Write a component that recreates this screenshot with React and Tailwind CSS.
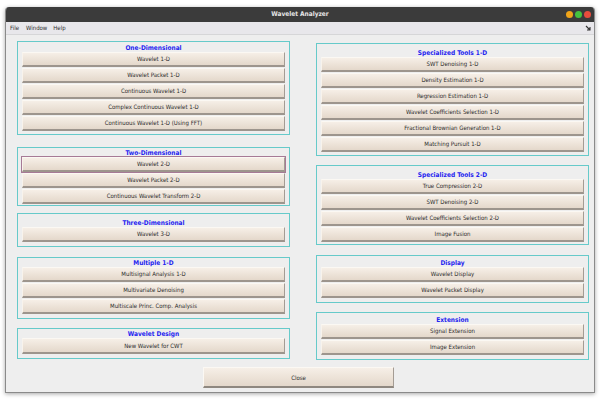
const left = [
  { title: "One-Dimensional", mt: "mt-[6px]", t: "h-[10px]", pb: "pb-[3px]", items: ["Wavelet 1-D", "Wavelet Packet 1-D", "Continuous Wavelet 1-D", "Complex Continuous Wavelet 1-D", "Continuous Wavelet 1-D (Using FFT)"] },
  { title: "Two-Dimensional", mt: "mt-[12px]", t: "h-[9px]", pb: "pb-[1px]", items: ["Wavelet 2-D", "Wavelet Packet 2-D", "Continuous Wavelet Transform 2-D"], focus: 0 },
  { title: "Three-Dimensional", mt: "mt-[7px]", t: "h-[13px]", pb: "pb-[4px]", items: ["Wavelet 3-D"] },
  { title: "Multiple 1-D", mt: "mt-[10px]", t: "h-[9px]", pb: "pb-[4px]", items: ["Multisignal Analysis 1-D", "Multivariate Denoising", "Multiscale Princ. Comp. Analysis"] },
  { title: "Wavelet Design", mt: "mt-[9px]", t: "h-[9px]", pb: "pb-[4px]", items: ["New Wavelet for CWT"], tall: true },
];

const right = [
  { title: "Specialized Tools 1-D", mt: "mt-[8px]", t: "h-[13px]", pb: "pb-[3px]", items: ["SWT Denoising 1-D", "Density Estimation 1-D", "Regression Estimation 1-D", "Wavelet Coefficients Selection 1-D", "Fractional Brownian Generation 1-D", "Matching Pursuit 1-D"] },
  { title: "Specialized Tools 2-D", mt: "mt-[9px]", t: "h-[13px]", pb: "pb-[2px]", items: ["True Compression 2-D", "SWT Denoising 2-D", "Wavelet Coefficients Selection 2-D", "Image Fusion"] },
  { title: "Display", mt: "mt-[10px]", t: "h-[11px]", pb: "pb-[4px]", items: ["Wavelet Display", "Wavelet Packet Display"] },
  { title: "Extension", mt: "mt-[9px]", t: "h-[11px]", pb: "pb-[4px]", items: ["Signal Extension", "Image Extension"] },
];

function Btn({ label, focus, tall }) {
  return (
    <div
      className={
        "flex items-center justify-center box-border bg-gradient-to-b from-[#f6efe7] to-[#e4d8cb] border-t border-l border-t-[#fbf8f3] border-l-[#f8f3ec] border-r border-r-[#a49c94] border-b-2 border-b-[#9d958d] text-[#2b2b2b] text-[6px] leading-none " +
        (tall ? "h-[16px]" : "h-[15px]") +
        (focus ? " outline outline-1 outline-[#a67a96]" : "")
      }
    >
      {label}
    </div>
  );
}

function Panel({ p }) {
  return (
    <div className={`${p.mt} border border-[#66caca] px-[4px] ${p.pb}`}>
      <div className={`${p.t} flex items-end justify-center text-[#2424f0] font-bold text-[6.5px] leading-none pb-[1px]`}>
        {p.title}
      </div>
      <div className="flex flex-col gap-[1px]">
        {p.items.map((it, i) => (
          <Btn key={it} label={it} focus={p.focus === i} tall={p.tall} />
        ))}
      </div>
    </div>
  );
}

export default function App() {
  return (
    <div className="w-[600px] h-[400px] bg-white pt-[7px] pl-[5px]" style={{ fontFamily: '"DejaVu Sans Condensed", "DejaVu Sans", sans-serif' }}>
      <div className="w-[590px] h-[386px] flex flex-col bg-[#eeeeee] border-l border-r border-b border-[#8a8a8a] rounded-t-[4px] shadow-[0_1px_4px_rgba(0,0,0,0.35)] overflow-hidden">
        {/* title bar */}
        <div className="h-[15px] bg-[#3b3b3b] flex items-center relative">
          <div className="flex-1 text-center text-[#e6e6e6] font-bold text-[6.5px] leading-none">Wavelet Analyzer</div>
          <div className="absolute right-[3px] top-[4px] flex gap-[2px]">
            <span className="w-[7px] h-[7px] rounded-full bg-[#f0a419]" />
            <span className="w-[7px] h-[7px] rounded-full bg-[#44c23e]" />
            <span className="w-[7px] h-[7px] rounded-full bg-[#e84c3d]" />
          </div>
        </div>
        {/* menu bar */}
        <div className="h-[13px] bg-[#e8e7eb] border-b border-[#d6d6d8] flex items-center pl-[4px] text-[6px] text-[#2e2e2e] leading-none">
          <span className="mr-[7px]">File</span>
          <span className="mr-[6px]">Window</span>
          <span>Help</span>
          <svg className="ml-auto mr-[3px]" width="6" height="6" viewBox="0 0 6 6">
            <path d="M1 1 L5 5 M5 2 L5 5 L2 5" stroke="#333" strokeWidth="1.1" fill="none" />
          </svg>
        </div>
        {/* content */}
        <div className="flex pl-[11px]">
          <div className="w-[273px] flex flex-col">
            {left.map((p) => (
              <Panel key={p.title} p={p} />
            ))}
          </div>
          <div className="w-[273px] ml-[26px] flex flex-col">
            {right.map((p) => (
              <Panel key={p.title} p={p} />
            ))}
          </div>
        </div>
        <div className="pl-[197px] mt-[7px]">
          <div className="w-[191px] h-[21px] flex items-center justify-center box-border bg-gradient-to-b from-[#f6efe7] to-[#e4d8cb] border-t border-l border-[#fbf8f3] border-r border-r-[#a49c94] border-b-2 border-b-[#8f8880] text-[#2b2b2b] text-[6px]">
            Close
          </div>
        </div>
      </div>
    </div>
  );
}
